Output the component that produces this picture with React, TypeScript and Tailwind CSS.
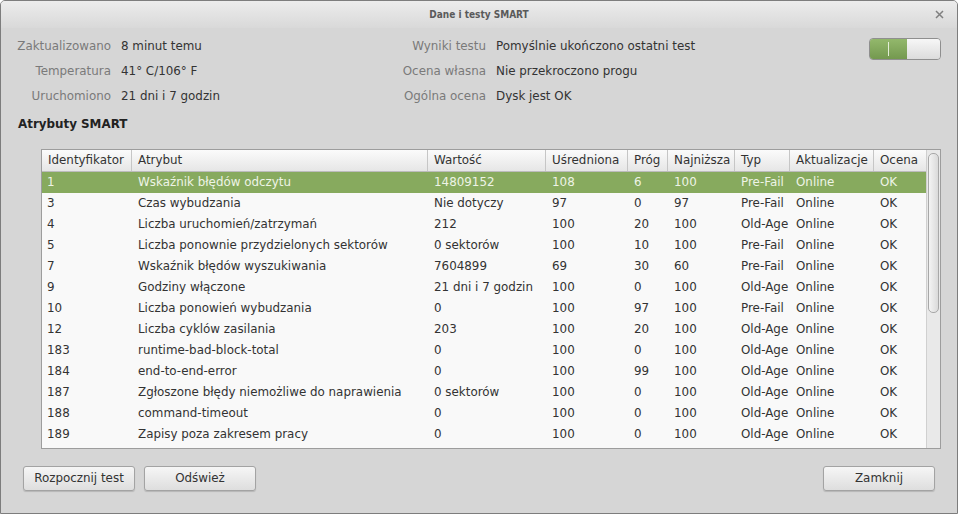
const rows = [
  ['1', 'Wskaźnik błędów odczytu', '14809152', '108', '6', '100', 'Pre-Fail', 'Online', 'OK'],
  ['3', 'Czas wybudzania', 'Nie dotyczy', '97', '0', '97', 'Pre-Fail', 'Online', 'OK'],
  ['4', 'Liczba uruchomień/zatrzymań', '212', '100', '20', '100', 'Old-Age', 'Online', 'OK'],
  ['5', 'Liczba ponownie przydzielonych sektorów', '0 sektorów', '100', '10', '100', 'Pre-Fail', 'Online', 'OK'],
  ['7', 'Wskaźnik błędów wyszukiwania', '7604899', '69', '30', '60', 'Pre-Fail', 'Online', 'OK'],
  ['9', 'Godziny włączone', '21 dni i 7 godzin', '100', '0', '100', 'Old-Age', 'Online', 'OK'],
  ['10', 'Liczba ponowień wybudzania', '0', '100', '97', '100', 'Pre-Fail', 'Online', 'OK'],
  ['12', 'Liczba cyklów zasilania', '203', '100', '20', '100', 'Old-Age', 'Online', 'OK'],
  ['183', 'runtime-bad-block-total', '0', '100', '0', '100', 'Old-Age', 'Online', 'OK'],
  ['184', 'end-to-end-error', '0', '100', '99', '100', 'Old-Age', 'Online', 'OK'],
  ['187', 'Zgłoszone błędy niemożliwe do naprawienia', '0 sektorów', '100', '0', '100', 'Old-Age', 'Online', 'OK'],
  ['188', 'command-timeout', '0', '100', '0', '100', 'Old-Age', 'Online', 'OK'],
  ['189', 'Zapisy poza zakresem pracy', '0', '100', '0', '100', 'Old-Age', 'Online', 'OK'],
]

const headers = ['Identyfikator', 'Atrybut', 'Wartość', 'Uśredniona', 'Próg', 'Najniższa', 'Typ', 'Aktualizacje', 'Ocena']

const cols = 'grid grid-cols-[90px_296px_118px_82px_40px_67px_55px_84px_52px]'

const InfoRow = ({ label, value }: { label: string; value: string }) => (
  <div className="flex h-[25px] items-center">
    <span className="w-[109px] text-right text-[#7a7a7a]">{label}</span>
    <span className="ml-[10px] text-[#333]">{value}</span>
  </div>
)

const Button = ({ children }: { children: string }) => (
  <button className="h-[25px] w-[112px] rounded-[3px] border border-[#a3a3a3] bg-gradient-to-b from-[#f6f6f6] to-[#dedede] text-[11.9px] text-[#333] shadow-[0_1px_1px_rgba(0,0,0,0.15)]">
    {children}
  </button>
)

export default function App() {
  return (
    <div
      className="flex h-[514px] w-[958px] flex-col overflow-hidden rounded-t-[5px] border border-[#7d7d7d] bg-[#d6d6d6] text-[11.9px]"
      style={{ fontFamily: '"DejaVu Sans", "Liberation Sans", sans-serif' }}
    >
      {/* title bar */}
      <div className="relative flex h-[27px] shrink-0 items-center justify-center bg-gradient-to-b from-[#ececec] to-[#d9d9d9]">
        <span
          className="text-[10px] font-bold text-[#5a5a5a]"
          style={{ fontFamily: '"DejaVu Sans Condensed", "DejaVu Sans", sans-serif' }}
        >
          Dane i testy SMART
        </span>
        <svg className="absolute right-[13px] top-[9px]" width="9" height="9" viewBox="0 0 9 9">
          <path d="M1 1L8 8M8 1L1 8" stroke="#808080" strokeWidth="1.5" />
        </svg>
      </div>

      {/* info */}
      <div className="mt-[6px] flex">
        <div className="w-[376px] pl-[1px]">
          <InfoRow label="Zaktualizowano" value="8 minut temu" />
          <InfoRow label="Temperatura" value="41° C/106° F" />
          <InfoRow label="Uruchomiono" value="21 dni i 7 godzin" />
        </div>
        <div>
          <InfoRow label="Wyniki testu" value="Pomyślnie ukończono ostatni test" />
          <InfoRow label="Ocena własna" value="Nie przekroczono progu" />
          <InfoRow label="Ogólna ocena" value="Dysk jest OK" />
        </div>
        <div className="ml-auto mr-[16px] mt-[4px] flex h-[22px] w-[72px] overflow-hidden rounded-[4px] border border-[#8f8f8f]">
          <div className="flex w-[37px] items-center justify-center bg-gradient-to-b from-[#93b86c] to-[#74994f]">
            <div className="h-[14px] w-px bg-[#e4eed8]" />
          </div>
          <div className="flex-1 bg-gradient-to-b from-[#f7f7f7] to-[#dcdcdc]" />
        </div>
      </div>

      <div className="ml-[17px] mt-[8px] h-[15px] leading-[15px] font-bold text-[#222]">Atrybuty SMART</div>

      {/* table */}
      <div className="ml-[40px] mt-[17px] flex h-[300px] w-[900px] border border-[#9d9d9d] bg-[#f9f9f9]">
        <div className="flex-1">
          <div className={`${cols} h-[22px] border-b border-[#bcbcbc] bg-gradient-to-b from-[#fbfbfb] to-[#e6e6e6] text-[#333]`}>
            {headers.map((h, i) => (
              <div key={h} className={`flex items-center pl-[6px] ${i < headers.length - 1 ? 'border-r border-[#c6c6c6]' : ''}`}>
                {h}
              </div>
            ))}
          </div>
          {rows.map((r, ri) => (
            <div
              key={r[0]}
              className={`${cols} h-[21px] items-center ${ri === 0 ? 'bg-[#87aa5e] text-[#eef4e6]' : 'text-[#333]'}`}
            >
              {r.map((c, ci) => (
                <div key={ci} className={`whitespace-nowrap ${ci === 0 ? 'pl-[5px]' : 'pl-[6px]'}`}>
                  {c}
                </div>
              ))}
            </div>
          ))}
        </div>
        {/* scrollbar */}
        <div className="w-[14px] border-l border-[#d0d0d0] bg-[#e9e9e9] px-[1px] pt-[3px]">
          <div className="h-[160px] rounded-[5px] border border-[#a8a8a8] bg-gradient-to-r from-[#f4f4f4] to-[#dadada]" />
        </div>
      </div>

      {/* buttons */}
      <div className="mt-[17px] flex gap-[9px] pl-[22px] pr-[22px]">
        <Button>Rozpocznij test</Button>
        <Button>Odśwież</Button>
        <div className="ml-auto">
          <Button>Zamknij</Button>
        </div>
      </div>
    </div>
  )
}
